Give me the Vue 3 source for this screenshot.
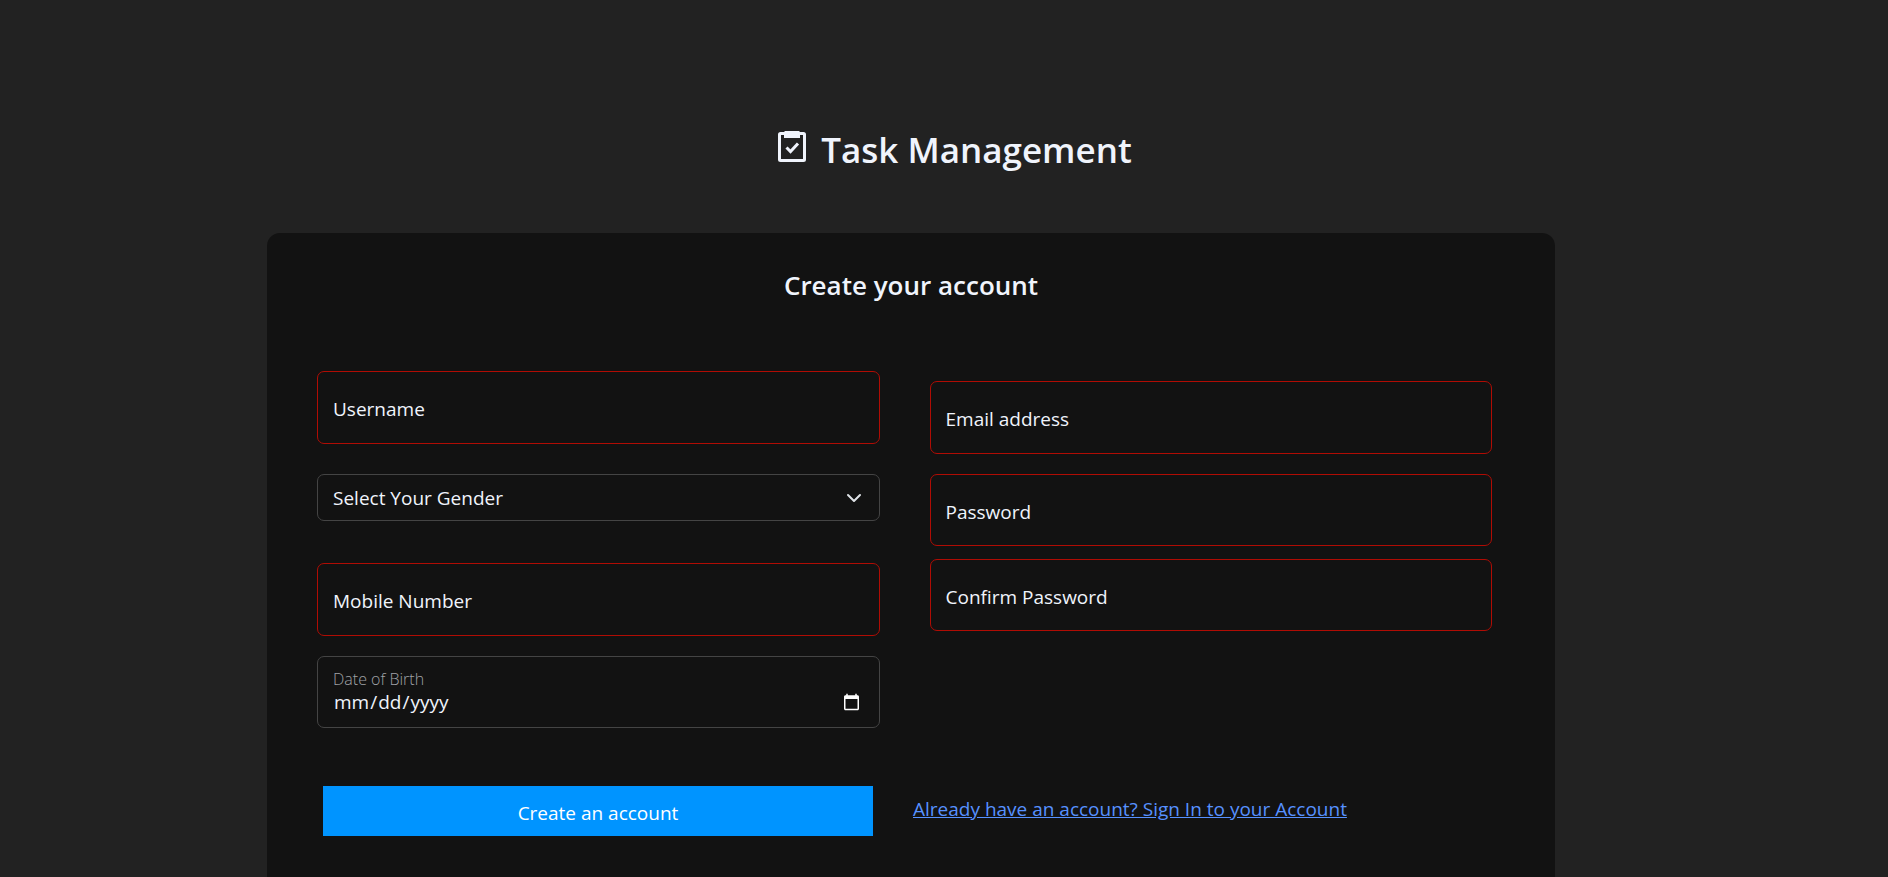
<script setup>
import { ref } from 'vue'

const username = ref('')
const gender = ref('')
const mobile = ref('')
const birthDate = ref('')
const email = ref('')
const password = ref('')
const confirmPassword = ref('')
</script>

<template>
  <main class="page">
    <h1 class="brand">
      <svg class="brand-icon" viewBox="0 0 28 31" aria-hidden="true">
        <rect x="1.5" y="2.5" width="25" height="27" rx="1" fill="none" stroke="currentColor" stroke-width="3" />
        <path d="M6 1 7 0h14l1 1v6H6z" fill="currentColor" />
        <path d="m8.5 16.5 4 4 7.5-8" fill="none" stroke="currentColor" stroke-width="3" />
      </svg>
      <span>Task Management</span>
    </h1>

    <form class="card" @submit.prevent>
      <h2 class="heading">Create your account</h2>

      <div class="columns">
        <div class="column">
          <div class="field invalid">
            <input id="username" v-model="username" type="text" required />
            <label for="username">Username</label>
          </div>
          <div class="select-field">
            <select id="gender" v-model="gender" aria-label="Gender">
              <option value="">Select Your Gender</option>
              <option value="male">Male</option>
              <option value="female">Female</option>
            </select>
            <svg class="chevron" viewBox="0 0 16 16" aria-hidden="true">
              <path d="m2 5 6 6 6-6" fill="none" stroke="#dee2e6" stroke-width="2" stroke-linecap="round" stroke-linejoin="round" />
            </svg>
          </div>
          <div class="field invalid">
            <input id="mobile" v-model="mobile" type="tel" required />
            <label for="mobile">Mobile Number</label>
          </div>
          <div class="field date">
            <input id="birth-date" v-model="birthDate" type="date" />
            <label for="birth-date">Date of Birth</label>
          </div>
        </div>

        <div class="column column-right">
          <div class="field invalid">
            <input id="email" v-model="email" type="email" required />
            <label for="email">Email address</label>
          </div>
          <div class="field invalid secret">
            <input id="password" v-model="password" type="password" required />
            <label for="password">Password</label>
          </div>
          <div class="field invalid secret confirm">
            <input id="confirm" v-model="confirmPassword" type="password" required />
            <label for="confirm">Confirm Password</label>
          </div>
        </div>
      </div>

      <div class="actions">
        <button type="submit">Create an account</button>
        <a href="#">Already have an account? Sign In to your Account</a>
      </div>
    </form>
  </main>
</template>

<style>
body {
  margin: 0;
  background: #222;
}
</style>

<style scoped>
* {
  box-sizing: border-box;
}

.page {
  display: flex;
  flex-direction: column;
  min-height: 100vh;
  padding: 120px 333px 0 267px;
  color: #f0f4fc;
  background: #222;
  font-family: "Segoe UI", "Open Sans", sans-serif;
  font-size: 19px;
  line-height: 28px;
}

.brand {
  display: flex;
  justify-content: center;
  gap: 15px;
  height: 60px;
  margin: 0 0 53px 88px;
  font-size: 35px;
  font-weight: 600;
  line-height: 60px;
  white-space: nowrap;
}

.brand-icon {
  width: 28px;
  height: 31px;
  margin-top: 11px;
}

.card {
  flex: 1;
  padding: 32px 63px 40px 50px;
  border-radius: 13px 13px 0 0;
  background: #121212;
}

.heading {
  margin: 0 0 66px 13px;
  font-size: 26px;
  font-weight: 600;
  line-height: 40px;
  text-align: center;
}

.columns {
  display: grid;
  grid-template-columns: 1fr 1fr;
  gap: 50px;
}

.column {
  display: flex;
  flex-direction: column;
  gap: 20px;
}

.column-right {
  padding-top: 10px;
}

.field,
.select-field {
  position: relative;
}

.field input,
.select-field select {
  display: block;
  width: 100%;
  border: 1px solid #444;
  border-radius: 7px;
  outline: none;
  color: inherit;
  background: transparent;
  font: inherit;
  color-scheme: dark;
}

.field input {
  height: 73px;
  padding: 32px 16px 12px;
}

.field label {
  position: absolute;
  top: 24px;
  left: 16px;
  pointer-events: none;
}

.field.invalid input {
  border-color: #b00c04;
}

.field.secret input,
.field.date input {
  height: 72px;
}

.select-field {
  margin: 10px 0 22px;
}

.select-field select {
  height: 47px;
  padding: 1px 48px 0 15px;
  appearance: none;
}

.chevron {
  position: absolute;
  top: 16px;
  right: 18px;
  width: 16px;
  height: 16px;
  pointer-events: none;
}

.field.date input {
  padding: 32px 16px 12px 15px;
}

.field.date label {
  top: 9px;
  color: #a0a2a7;
  font-size: 16px;
  font-weight: 300;
}

.confirm {
  margin-top: -7px;
}

.actions {
  display: grid;
  grid-template-columns: 1fr 1fr;
  gap: 40px;
  align-items: start;
  padding: 58px 29px 0 6px;
}

button {
  height: 50px;
  padding: 4px 12px 0;
  border: 0;
  color: #fff;
  background: #0094ff;
  font: inherit;
}

a {
  justify-self: start;
  margin-top: 9px;
  color: #5791ff;
}
</style>
